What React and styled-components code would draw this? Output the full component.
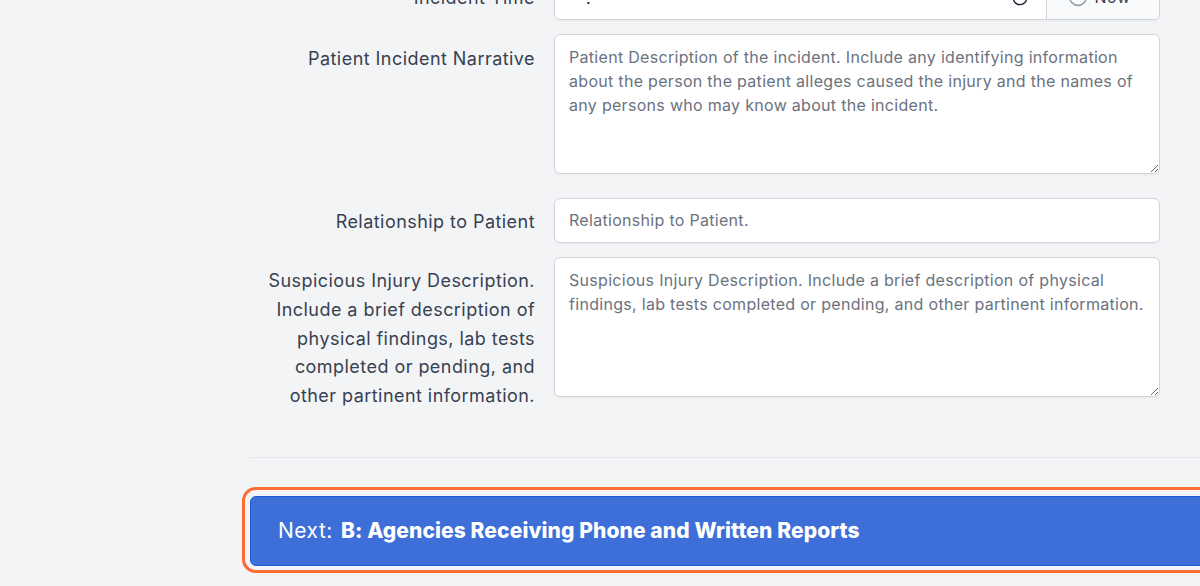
import React from 'react';
import styled, { createGlobalStyle } from 'styled-components';

const GlobalStyle = createGlobalStyle`
  html, body {
    margin: 0;
    height: 100%;
    overflow: hidden;
    background: #f3f4f6;
  }

  * {
    box-sizing: border-box;
  }
`;

const Page = styled.main`
  margin-top: -25px;
  padding-left: 250px;
  font-family: Inter, 'Liberation Sans', sans-serif;
`;

const Form = styled.form`
  display: flex;
  flex-direction: column;
  padding-right: 40px;
`;

const Row = styled.div`
  display: grid;
  grid-template-columns: 285px 606px;
  column-gap: 19px;
  margin-bottom: ${({ gap }) => gap}px;
`;

const Label = styled.label`
  padding-top: ${({ top }) => top}px;
  text-align: right;
  font-size: 18px;
  letter-spacing: 0.45px;
  line-height: 28.8px;
  color: #374151;
`;

const TimeGroup = styled.div`
  display: flex;
  height: 45px;
  border: 1px solid #d1d5db;
  border-radius: 6px;
  background: #fff;
  box-shadow: 0 1px 2px rgba(0, 0, 0, 0.05);
  overflow: hidden;
`;

const TimeValue = styled.div`
  flex: 1;
  display: flex;
  align-items: center;
  justify-content: space-between;
  padding: 0 18px 0 15px;
  font-size: 16px;
  letter-spacing: 0.6px;
  color: #111827;
`;

const NowButton = styled.div`
  width: 113px;
  display: flex;
  align-items: center;
  justify-content: center;
  gap: 7px;
  padding: 0 8px 2px 0;
  border-left: 1px solid #d1d5db;
  background: #f9fafb;
  font-size: 16px;
  letter-spacing: 0.5px;
  color: #374151;
`;

const Input = styled.input`
  width: 100%;
  height: 45px;
  padding: 0 14px 2px;
  border: 1px solid #d1d5db;
  border-radius: 6px;
  background: #fff;
  box-shadow: 0 1px 2px rgba(0, 0, 0, 0.05);
  font-family: inherit;
  font-size: 16px;
  letter-spacing: 0.3px;

  &::placeholder {
    color: #6b7280;
    opacity: 1;
  }
`;

const TextArea = styled.textarea`
  display: block;
  width: 100%;
  height: 140px;
  padding: 10px 14px;
  border: 1px solid #d1d5db;
  border-radius: 6px;
  background: #fff;
  box-shadow: 0 1px 2px rgba(0, 0, 0, 0.05);
  font-family: inherit;
  font-size: 16px;
  letter-spacing: 0.3px;
  line-height: 24px;

  &::placeholder {
    color: #6b7280;
    opacity: 1;
  }
`;

const Divider = styled.hr`
  height: 1px;
  margin: 46px 0 38px;
  border: 0;
  background: #e5e7eb;
`;

const NextButton = styled.button`
  display: flex;
  align-items: center;
  width: 1000px;
  height: 70px;
  padding: 0 27px;
  border: 1px solid #1d5ad6;
  border-radius: 6px;
  background: #3e6fd8;
  box-shadow: 0 -1px 0 5px #f3f4f6, 0 -1px 0 8px #ff6b35;
  font-family: inherit;
  font-size: 21px;
  letter-spacing: 0.5px;
  color: #fff;
  text-align: left;
`;

const NextTitle = styled.strong`
  margin-left: 8px;
  font-weight: 800;
  letter-spacing: 0.1px;
`;

const Icon = styled.svg`
  width: ${({ size }) => size}px;
  height: ${({ size }) => size}px;
  flex: none;
  fill: none;
  stroke: ${({ color }) => color};
  stroke-width: 2;
`;

const ClockIcon = ({ size, color }) => (
  <Icon size={size} color={color} viewBox="0 0 24 24">
    <circle cx="12" cy="12" r="10" />
    <path d="M12 6v6l4 2" />
  </Icon>
);

const App = () => (
  <>
    <GlobalStyle />
    <Page>
      <Form>
        <Row gap={14}>
          <Label top={9}>Incident Time</Label>
          <TimeGroup>
            <TimeValue>
              <span>--:-- --</span>
              <ClockIcon size={16} color="#111827" />
            </TimeValue>
            <NowButton>
              <ClockIcon size={20} color="#9ca3af" />
              Now
            </NowButton>
          </TimeGroup>
        </Row>
        <Row gap={24}>
          <Label top={11}>Patient Incident Narrative</Label>
          <TextArea placeholder="Patient Description of the incident. Include any identifying information about the person the patient alleges caused the injury and the names of any persons who may know about the incident." />
        </Row>
        <Row gap={14}>
          <Label top={10}>Relationship to Patient</Label>
          <Input placeholder="Relationship to Patient." />
        </Row>
        <Row gap={0}>
          <Label top={10}>
            Suspicious Injury Description. Include a brief description of physical findings, lab tests completed or pending, and other partinent information.
          </Label>
          <TextArea placeholder="Suspicious Injury Description. Include a brief description of physical findings, lab tests completed or pending, and other partinent information." />
        </Row>
      </Form>
      <Divider />
      <NextButton type="button">
        Next: <NextTitle>B: Agencies Receiving Phone and Written Reports</NextTitle>
      </NextButton>
    </Page>
  </>
);

export default App;
